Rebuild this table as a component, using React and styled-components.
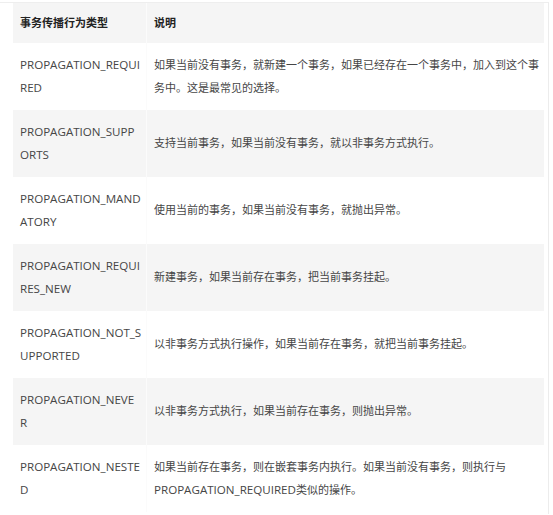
import React from "react";
import styled, { createGlobalStyle } from "styled-components";

const GlobalStyle = createGlobalStyle`
  body {
    margin: 0;
    background: #ffffff;
    font-family: "Open Sans", "Noto Sans CJK SC", sans-serif;
  }
`;

const Frame = styled.div`
  width: 549px;
  margin-top: 2px;
  padding: 0 4px 0 13px;
  border-top: 1px solid #eeeeee;
  border-right: 1px solid #ececec;
  min-height: 512px;
  box-sizing: border-box;
`;

const Row = styled.div`
  display: grid;
  grid-template-columns: 133px 1fr;
  height: ${(p) => (p.head ? 40 : 67)}px;
  background: ${(p) => (p.shaded ? "#f5f5f5" : "#ffffff")};
  color: ${(p) => (p.head ? "#222222" : "#464646")};
  font-weight: ${(p) => (p.head ? 700 : 400)};
`;

const Cell = styled.div`
  display: flex;
  flex-direction: column;
  justify-content: center;
  padding: 0 0 0 7px;
  line-height: 22.5px;
  white-space: nowrap;
  font-size: ${(p) => (p.latin ? "11.6px" : "11px")};
  & + & {
    border-left: 1px solid ${(p) => (p.shaded ? "#fbfbfb" : "#ffffff")};
  }
`;

const Latin = styled.span`
  font-size: 11.6px;
`;

const rows = [
  {
    name: ["PROPAGATION_REQUI", "RED"],
    desc: [
      "如果当前没有事务，就新建一个事务，如果已经存在一个事务中，加入到这个事",
      "务中。这是最常见的选择。",
    ],
  },
  { name: ["PROPAGATION_SUPP", "ORTS"], desc: ["支持当前事务，如果当前没有事务，就以非事务方式执行。"] },
  { name: ["PROPAGATION_MAND", "ATORY"], desc: ["使用当前的事务，如果当前没有事务，就抛出异常。"] },
  { name: ["PROPAGATION_REQUI", "RES_NEW"], desc: ["新建事务，如果当前存在事务，把当前事务挂起。"] },
  { name: ["PROPAGATION_NOT_S", "UPPORTED"], desc: ["以非事务方式执行操作，如果当前存在事务，就把当前事务挂起。"] },
  { name: ["PROPAGATION_NEVE", "R"], desc: ["以非事务方式执行，如果当前存在事务，则抛出异常。"] },
  {
    name: ["PROPAGATION_NESTE", "D"],
    desc: [
      "如果当前存在事务，则在嵌套事务内执行。如果当前没有事务，则执行与",
      <>
        <Latin>PROPAGATION_REQUIRED</Latin>类似的操作。
      </>,
    ],
  },
];

function Lines({ items }) {
  return items.map((t, i) => <span key={i}>{t}</span>);
}

export default function App() {
  return (
    <>
      <GlobalStyle />
      <Frame>
        <Row head shaded>
          <Cell shaded>事务传播行为类型</Cell>
          <Cell shaded>说明</Cell>
        </Row>
        {rows.map((r, i) => (
          <Row key={i} shaded={i % 2 === 1}>
            <Cell latin shaded={i % 2 === 1}>
              <Lines items={r.name} />
            </Cell>
            <Cell shaded={i % 2 === 1}>
              <Lines items={r.desc} />
            </Cell>
          </Row>
        ))}
      </Frame>
    </>
  );
}
